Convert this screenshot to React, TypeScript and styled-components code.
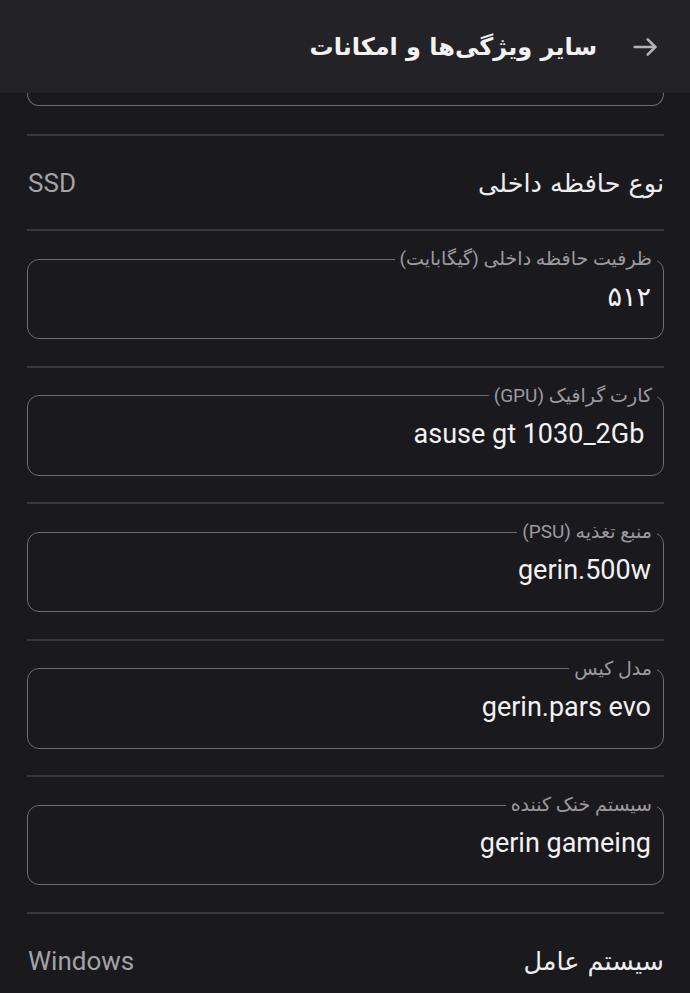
import React from 'react';
import styled, { createGlobalStyle } from 'styled-components';

const Global = createGlobalStyle`
  html, body { margin: 0; padding: 0; background: #1a191d; }
  body { font-family: Roboto, "DejaVu Sans", sans-serif; }
  * { box-sizing: border-box; }
`;

const Page = styled.div`
  direction: rtl;
  width: 690px;
  height: 993px;
  overflow: hidden;
  display: flex;
  flex-direction: column;
  background: #1a191d;
`;

const Header = styled.header`
  flex: none;
  height: 93px;
  background: #232226;
  display: flex;
  align-items: center;
  gap: 35px;
  padding: 0 32px;
`;

const BackButton = styled.button`
  border: none;
  background: none;
  padding: 0;
  width: 26px;
  height: 26px;
  display: flex;
  align-items: center;
  justify-content: center;
  color: #b3b3b6;
`;

const Title = styled.h1`
  margin: 0;
  font-family: "DejaVu Sans", sans-serif;
  font-weight: 700;
  font-size: 24px;
  color: #f2f2f2;
`;

const Content = styled.main`
  display: flex;
  flex-direction: column;
  padding: 0 26px 0 27px;
`;

const FieldTail = styled.div`
  height: 13px;
  margin-bottom: 28px;
  border: 1.5px solid #6e6d72;
  border-top: none;
  border-radius: 0 0 12px 12px;
`;

const Divider = styled.hr`
  margin: 0;
  border: none;
  height: 2px;
  background: #39383d;
`;

const InfoRow = styled.div<{ $h: number }>`
  height: ${(p) => p.$h}px;
  display: flex;
  align-items: center;
  justify-content: space-between;
  padding-left: 1px;
`;

const InfoLabel = styled.span`
  font-family: "DejaVu Sans", sans-serif;
  font-size: 25.5px;
  color: #ededed;
`;

const InfoValue = styled.span`
  font-family: Roboto, sans-serif;
  font-size: 26px;
  color: #a3a3a6;
`;

const FieldBlock = styled.div`
  padding: 18px 0 26.6px;
`;

const Fieldset = styled.fieldset`
  margin: 0;
  height: 90px;
  padding: 0 6px;
  border: 1.5px solid #6e6d72;
  border-radius: 12px;
`;

const Legend = styled.legend`
  padding: 0 5px;
  font-family: Roboto, "DejaVu Sans", sans-serif;
  font-size: 19px;
  line-height: 20px;
  color: #9c9ba0;
`;

const Value = styled.div`
  margin-top: 13px;
  padding: 0 6px;
  text-align: right;
  white-space: pre;
  font-family: Roboto, "DejaVu Sans", sans-serif;
  font-size: 27px;
  line-height: 30px;
  color: #f2f2f2;
`;

const ArrowIcon = () => (
  <svg width="26" height="26" viewBox="0 0 24 24" fill="none" stroke="currentColor" strokeWidth="2.4" strokeLinecap="round" strokeLinejoin="round">
    <path d="M2.5 12h19" />
    <path d="M14.5 5l7 7-7 7" />
  </svg>
);

const fields = [
  { label: 'ظرفیت حافظه داخلی (گیگابایت)', value: '۵۱۲' },
  { label: 'کارت گرافیک (GPU)', value: 'asuse gt 1030_2Gb ' },
  { label: 'منبع تغذیه (PSU)', value: 'gerin.500w' },
  { label: 'مدل کیس', value: 'gerin.pars evo' },
  { label: 'سیستم خنک کننده', value: 'gerin gameing' },
];

export default function App() {
  return (
    <>
      <Global />
      <Page>
        <Header>
          <BackButton aria-label="بازگشت">
            <ArrowIcon />
          </BackButton>
          <Title>سایر ویژگی‌ها و امکانات</Title>
        </Header>
        <Content>
          <FieldTail />
          <Divider />
          <InfoRow $h={93}>
            <InfoLabel>نوع حافظه داخلی</InfoLabel>
            <InfoValue>SSD</InfoValue>
          </InfoRow>
          {fields.map((f) => (
            <React.Fragment key={f.label}>
              <Divider />
              <FieldBlock>
                <Fieldset>
                  <Legend>{f.label}</Legend>
                  <Value dir="auto">{f.value}</Value>
                </Fieldset>
              </FieldBlock>
            </React.Fragment>
          ))}
          <Divider />
          <InfoRow $h={94}>
            <InfoLabel>سیستم عامل</InfoLabel>
            <InfoValue>Windows</InfoValue>
          </InfoRow>
        </Content>
      </Page>
    </>
  );
}
